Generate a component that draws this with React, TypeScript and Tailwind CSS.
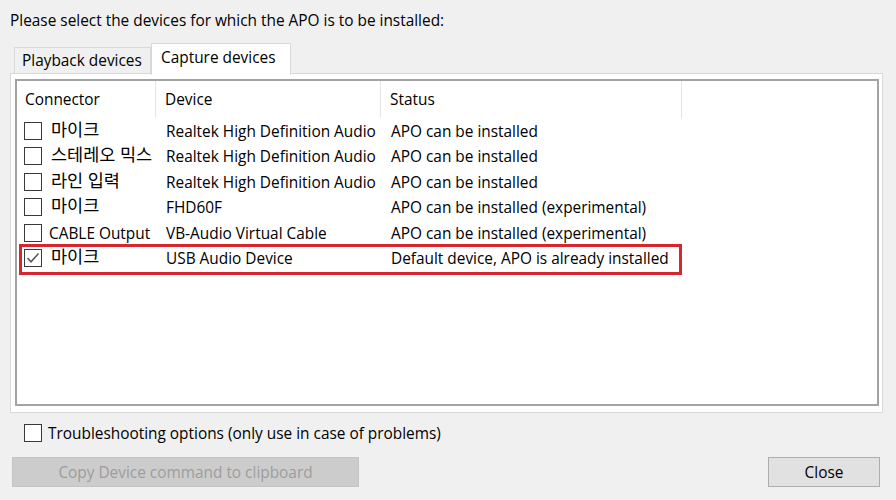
import React from "react";

const rows: { con: string; ko?: boolean; dev: string; status: string; checked?: boolean }[] = [
  { con: "마이크", ko: true, dev: "Realtek High Definition Audio", status: "APO can be installed" },
  { con: "스테레오 믹스", ko: true, dev: "Realtek High Definition Audio", status: "APO can be installed" },
  { con: "라인 입력", ko: true, dev: "Realtek High Definition Audio", status: "APO can be installed" },
  { con: "마이크", ko: true, dev: "FHD60F", status: "APO can be installed (experimental)" },
  { con: "CABLE Output", dev: "VB-Audio Virtual Cable", status: "APO can be installed (experimental)" },
  { con: "마이크", ko: true, dev: "USB Audio Device", status: "Default device, APO is already installed", checked: true },
];

function Check({ checked }: { checked?: boolean }) {
  return (
    <div className="w-[18px] h-[18px] shrink-0 border border-[#3a3a3a] bg-white flex items-center justify-center">
      {checked && (
        <svg width="14" height="12" viewBox="0 0 14 12">
          <path d="M1.5 6 L5 9.8 L12.5 1.5" fill="none" stroke="#555" strokeWidth="1.5" />
        </svg>
      )}
    </div>
  );
}

export default function App() {
  return (
    <div
      className="w-[896px] h-[500px] bg-[#f0f0f0] text-black text-[15.4px] leading-[20px] overflow-hidden"
      style={{ fontFamily: '"Open Sans", "Noto Sans CJK KR", sans-serif' }}
    >
      <div className="pl-[10px] pt-[11px] h-[30px] leading-[20px]">
        Please select the devices for which the APO is to be installed:
      </div>
      {/* Tabs */}
      <div className="h-[13px]" />
      <div className="relative flex items-end pl-[14px] h-[30px] z-10">
        <div className="w-[137px] h-[26px] border border-b-0 border-[#d9d9d9] bg-[#f0f0f0] flex items-center pl-[7px]">
          Playback devices
        </div>
        <div className="w-[140px] h-[32px] -mb-[2px] border border-b-0 border-[#d9d9d9] bg-white flex items-center pl-[9px] pb-[4px]">
          Capture devices
        </div>
      </div>
      {/* Tab page */}
      <div className="ml-[10px] w-[873px] h-[340px] border border-[#d9d9d9] bg-white pt-[5px] pl-[4px]">
        <div className="relative w-[864px] h-[327px] border-2 border-[#a3a3a3] bg-white">
          <div className="flex h-[37px] items-center">
            <div className="w-[139px] h-full pl-[8px] flex items-center border-r border-[#e5e5e5]">Connector</div>
            <div className="w-[225px] h-full pl-[9px] flex items-center border-r border-[#e5e5e5]">Device</div>
            <div className="w-[301px] h-full pl-[9px] flex items-center border-r border-[#e5e5e5]">Status</div>
          </div>
          {rows.map((r, i) => (
            <div key={i} className="flex h-[25.5px] items-center whitespace-nowrap">
              <div className="w-[140px] flex items-center pl-[7px]">
                <Check checked={r.checked} />
                {r.ko ? (
                  <span className="ml-[9px] text-[17.5px] leading-[20px] -mt-[4px]">{r.con}</span>
                ) : (
                  <span className="ml-[7px] pt-[2px]">{r.con}</span>
                )}
              </div>
              <div className="w-[225px] pl-[9px] pt-[2px]">{r.dev}</div>
              <div className="pl-[9px] pt-[2px]">{r.status}</div>
            </div>
          ))}
          <div className="absolute left-[2px] top-[163px] w-[663px] h-[31px] border-[3px] border-[#d7262e]" />
        </div>
      </div>
      {/* Bottom */}
      <div className="flex items-center h-[18px] mt-[11px] pl-[24px]">
        <Check />
        <span className="ml-[6px] pt-[2px]">Troubleshooting options (only use in case of problems)</span>
      </div>
      <div className="flex justify-between mt-[15px] px-[12px] pr-[16px]">
        <div className="w-[347px] h-[30px] pt-[2px] bg-[#cccccc] border border-[#c4c4c4] text-[#9d9d9d] flex items-center justify-center">
          Copy Device command to clipboard
        </div>
        <div className="w-[112px] h-[30px] pt-[2px] bg-[#e1e1e1] border border-[#adadad] flex items-center justify-center">
          Close
        </div>
      </div>
    </div>
  );
}
